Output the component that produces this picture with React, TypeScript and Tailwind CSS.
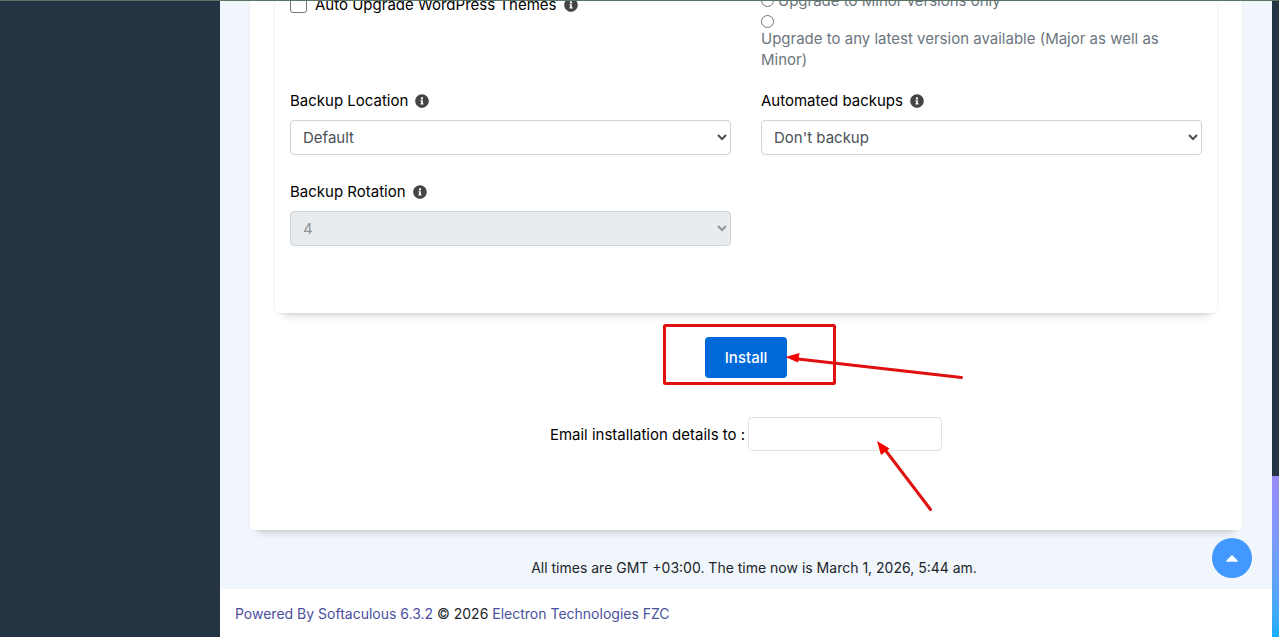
import React from 'react';
import { FaCaretUp, FaInfoCircle } from 'react-icons/fa';

type FieldProps = {
  id: string;
  label: string;
  options: string[];
  disabled?: boolean;
};

const InfoIcon: React.FC = () => (
  <FaInfoCircle className="h-[14px] w-[14px] shrink-0 text-[#444444]" aria-hidden="true" />
);

const SelectField: React.FC<FieldProps> = ({ id, label, options, disabled }) => (
  <div className="flex flex-col gap-[9px]">
    <div className="flex items-center gap-[7px]">
      <label htmlFor={id} className="text-black">
        {label}
      </label>
      <InfoIcon />
    </div>
    <select
      id={id}
      disabled={disabled}
      className="h-[35px] w-full rounded-[4px] border border-[#ced4da] bg-white pl-2 text-[#495057] disabled:bg-[#e9ecef] disabled:opacity-100 disabled:text-[#8f9499]"
    >
      {options.map((option) => (
        <option key={option}>{option}</option>
      ))}
    </select>
  </div>
);

const UpgradeOptions: React.FC = () => (
  <div className="grid grid-cols-2 gap-x-[30px]">
    <div className="flex items-center gap-2 self-start pt-1">
      <input
        id="auto-themes"
        type="checkbox"
        className="h-[17px] w-[17px] shrink-0 appearance-none rounded-[3px] border border-[#767676] bg-white"
      />
      <label htmlFor="auto-themes" className="text-black">
        Auto Upgrade WordPress Themes
      </label>
      <InfoIcon />
    </div>
    <div className="text-[#6c757d]">
      <div className="flex items-center gap-1">
        <input id="upgrade-minor" type="radio" name="upgrade" className="h-[13px] w-[13px]" />
        <label htmlFor="upgrade-minor">Upgrade to Minor versions only</label>
      </div>
      <input id="upgrade-any" type="radio" name="upgrade" className="mt-1 block h-[13px] w-[13px]" />
      <label htmlFor="upgrade-any" className="block">
        Upgrade to any latest version available (Major as well as
        <br />
        Minor)
      </label>
    </div>
  </div>
);

// Red box round the button, plus one arrow for the button and one for the e-mail box
const Markers: React.FC = () => (
  <svg
    className="pointer-events-none absolute top-0 left-1/2 h-[200px] w-[440px] -translate-x-1/2"
    viewBox="0 0 440 200"
    fill="none"
    stroke="#e01010"
    strokeWidth="3"
    strokeLinecap="round"
    aria-hidden="true"
  >
    <rect x="138.5" y="12.5" width="170" height="58" rx="1" />
    <path d="M272 46 435.500 64.500" />
    <path d="M360 138 404.500 196.500" />
    <path d="M259.500 44 273.500 40 272 49.500Z" fill="#f50000" stroke="none" />
    <path d="M351 128 363.500 135.500 355 142Z" fill="#f50000" stroke="none" />
  </svg>
);

export default function App() {
  return (
    <div className="flex h-screen overflow-hidden border-t border-[#5b7565] bg-white font-['Inter','Open_Sans',sans-serif] text-[14px] leading-[21px]">
      <aside className="w-[220px] shrink-0 bg-[#253442]" />

      <div className="flex min-w-0 flex-1 flex-col justify-end">
        <main className="shrink-0 bg-[#f0f6fc] px-[30px]">
          <div className="rounded-b-[4px] bg-white px-[25px] pb-[79px] text-[15px] leading-[21px] shadow-[0_0_3px_rgba(0,0,0,0.08),0_10px_8px_-8px_rgba(0,0,0,0.18)]">
            <section className="rounded-b-[4px] px-[15px] pb-[67px] shadow-[0_0_3px_rgba(0,0,0,0.12),0_10px_8px_-8px_rgba(0,0,0,0.18)]">
              <UpgradeOptions />
              <div className="mt-5 grid grid-cols-2 gap-x-[30px] gap-y-[26px]">
                <SelectField id="backup-location" label="Backup Location" options={['Default']} />
                <SelectField
                  id="automated-backups"
                  label="Automated backups"
                  options={["Don't backup", 'Once a day', 'Once a week', 'Once a month']}
                />
                <SelectField id="backup-rotation" label="Backup Rotation" options={['4']} disabled />
              </div>
            </section>

            <div className="relative flex flex-col items-center pt-6">
              <button
                type="button"
                className="h-[41px] rounded-[4px] bg-[#0069d9] px-5 font-medium text-white"
              >
                Install
              </button>
              <div className="mt-[39px] flex items-center gap-[3px]">
                <label htmlFor="email-to" className="text-black">
                  Email installation details to :
                </label>
                <input
                  id="email-to"
                  type="email"
                  className="h-[34px] w-[194px] rounded-[4px] border border-[#e2e2e2] bg-white px-3"
                />
              </div>
              <Markers />
            </div>
          </div>
          <p className="pt-[27px] pb-[11px] pl-4 text-center text-[#212529]">
            All times are GMT +03:00. The time now is March 1, 2026, 5:44 am.
          </p>
        </main>

        <footer className="flex h-12 shrink-0 items-center px-[15px] text-[#212529]">
          <p>
            <a href="#softaculous" className="text-[#4b4f9e]">
              Powered By Softaculous 6.3.2
            </a>{' '}
            © 2026{' '}
            <a href="#electron" className="text-[#4b4f9e]">
              Electron Technologies FZC
            </a>
          </p>
        </footer>
      </div>

      <div className="flex w-[7px] shrink-0 flex-col bg-[#253442]">
        <div className="mt-auto h-[161px] bg-linear-to-b from-[#9b8cfa] to-[#10adff]" />
      </div>

      <button
        type="button"
        aria-label="Back to top"
        className="fixed right-[27px] bottom-[59px] flex h-10 w-10 items-center justify-center rounded-full bg-[#4298ff] text-white"
      >
        <FaCaretUp className="h-5 w-5" />
      </button>
    </div>
  );
}
